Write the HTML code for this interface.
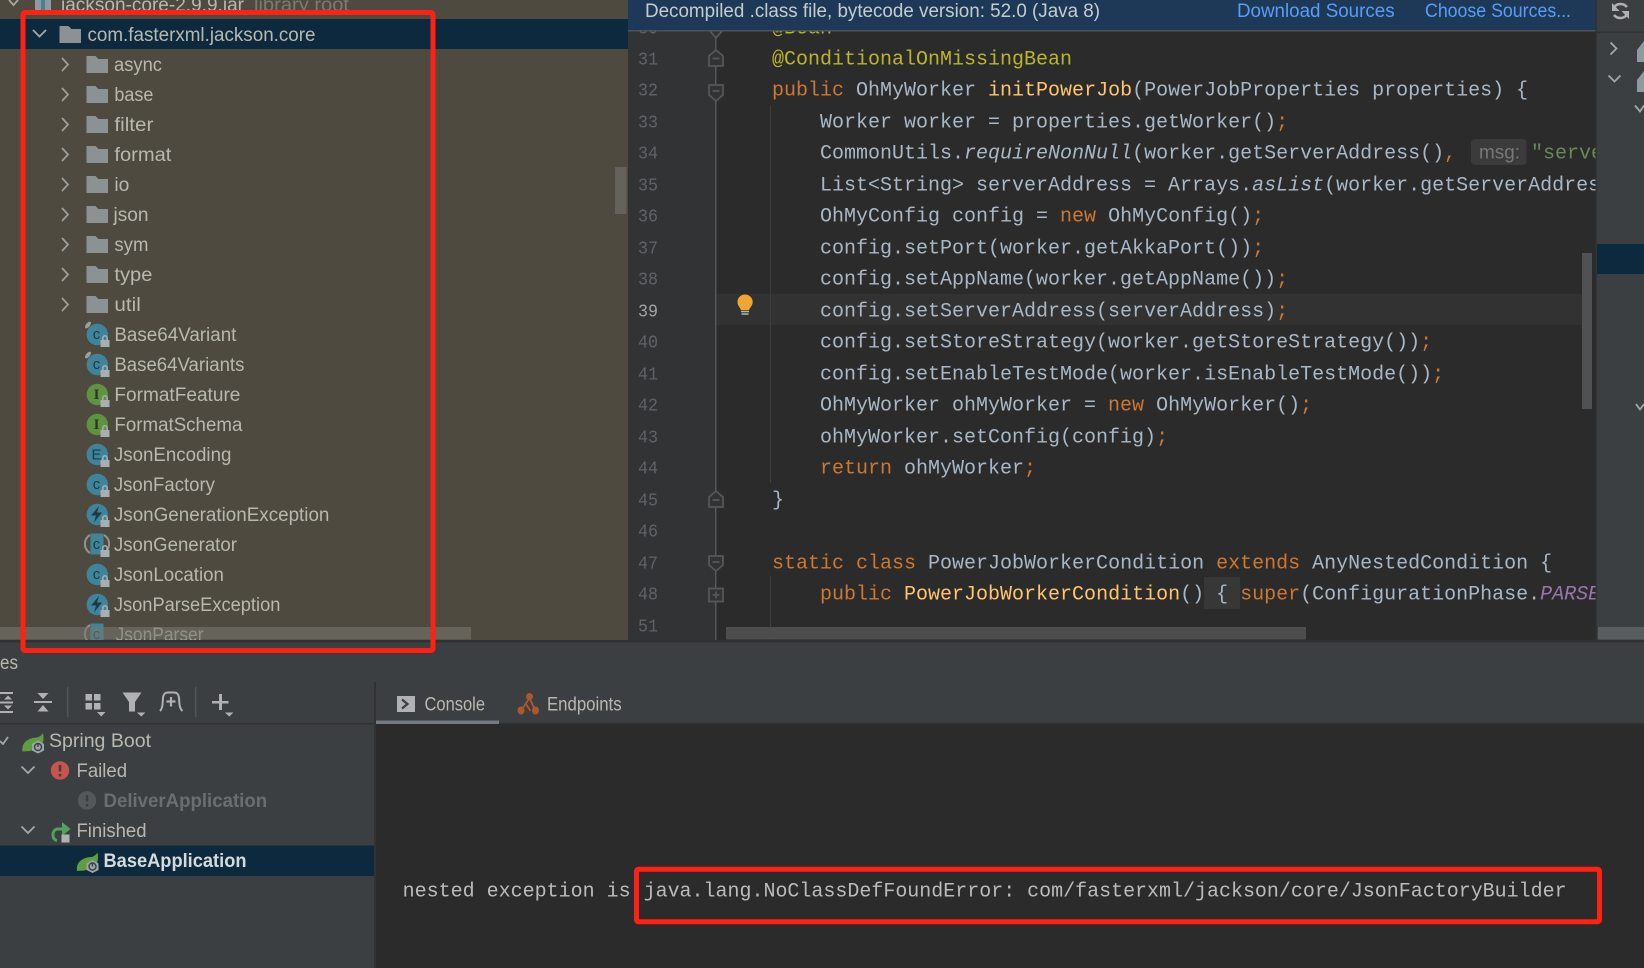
<!DOCTYPE html>
<html><head><meta charset="utf-8"><style>
html,body{margin:0;padding:0;background:#3c3f41;overflow:hidden}
svg{display:block}
text{white-space:pre}
.s{font-family:"Liberation Sans",sans-serif;font-size:19px;fill:#b8b8b0}
.m{font-family:"Liberation Mono",monospace;font-size:20px;fill:#a9b7c6}
.n{font-family:"Liberation Mono",monospace;font-size:18px;fill:#606366}
.k{fill:#cc7832}.a{fill:#bbb529}.f{fill:#ffc66d}.i{font-style:italic}.p{fill:#9876aa;font-style:italic}.g{fill:#6a8759}
.c{font-family:"Liberation Sans",sans-serif;font-size:15px;fill:#1d3a47;text-anchor:middle}
</style></head><body>
<svg width="1644" height="968" viewBox="0 0 1644 968" xmlns="http://www.w3.org/2000/svg">
<defs>
<clipPath id="tree"><rect x="0" y="0" width="628" height="640"/></clipPath>
<clipPath id="code"><rect x="716" y="0" width="880" height="640"/></clipPath>
<g id="lk"><path d="M6 5.500V3.500a2.200 2.200 0 0 1 4.400 0V5.500" fill="none" stroke="#a9aeb1" stroke-width="1.500"/><rect x="3.700" y="5.500" width="9" height="7" fill="#a9aeb1"/></g>
<path id="fd" d="M0 0H9L12 3H21.500V17H0Z" fill="#8c9293"/>
<path id="ch" d="M0 0L6 6.500L0 13" fill="none" stroke="#9c9e9c" stroke-width="1.800"/>
<path id="cd" d="M0 0L6.500 6.500L13 0" fill="none" stroke="#a5a8a8" stroke-width="1.800"/>
<g id="sp"><path d="M0.500 19C-1 9 8 5 15.500 5C17.500 4 19.500 3 21 0.500C22.500 8 20.500 13 17.500 15L8 18.500Z" fill="#5f9e3f"/><path d="M16 8L22 11.500V18L16 21L10 18V11.500Z" fill="#9aa7b0"/><circle cx="16" cy="14.500" r="3.500" fill="none" stroke="#3c3f41" stroke-width="1.400"/><path d="M16 11.500V14.500" stroke="#3c3f41" stroke-width="1.400"/></g>
</defs>

<!-- base -->
<rect width="1644" height="968" fill="#3c3f41"/>

<!-- tree panel -->
<rect x="0" y="0" width="628" height="640" fill="#4e4a3f"/>
<g clip-path="url(#tree)">
<rect x="0" y="19" width="628" height="30" fill="#0d293e"/>
<path d="M9 0L13.500 5L18 0" fill="none" stroke="#a5a8a0" stroke-width="1.800"/>
<rect x="35" y="-8" width="16" height="20" fill="#8f9aa0"/><rect x="41" y="0" width="4" height="10" fill="#4e7f90"/>
<text class="s" x="61" y="11" textLength="183" lengthAdjust="spacingAndGlyphs">jackson-core-2.9.9.jar</text>
<text class="s" x="254" y="11" textLength="95" lengthAdjust="spacingAndGlyphs" style="fill:#7d7a6e">library root</text>

<use href="#cd" x="33" y="30"/>
<use href="#fd" x="59.500" y="26"/>
<text class="s" x="87.500" y="41" textLength="228" lengthAdjust="spacingAndGlyphs">com.fasterxml.jackson.core</text>

<use href="#ch" x="62" y="58"/><use href="#fd" x="86.500" y="56"/><text class="s" x="114" y="71" textLength="48" lengthAdjust="spacingAndGlyphs">async</text>
<use href="#ch" x="62" y="88"/><use href="#fd" x="86.500" y="86"/><text class="s" x="114.400" y="101" textLength="39" lengthAdjust="spacingAndGlyphs">base</text>
<use href="#ch" x="62" y="118"/><use href="#fd" x="86.500" y="116"/><text class="s" x="114.400" y="131" textLength="39" lengthAdjust="spacingAndGlyphs">filter</text>
<use href="#ch" x="62" y="148"/><use href="#fd" x="86.500" y="146"/><text class="s" x="114.400" y="161" textLength="57" lengthAdjust="spacingAndGlyphs">format</text>
<use href="#ch" x="62" y="178"/><use href="#fd" x="86.500" y="176"/><text class="s" x="114.400" y="191" textLength="15" lengthAdjust="spacingAndGlyphs">io</text>
<use href="#ch" x="62" y="208"/><use href="#fd" x="86.500" y="206"/><text class="s" x="113.500" y="221" textLength="35" lengthAdjust="spacingAndGlyphs">json</text>
<use href="#ch" x="62" y="238"/><use href="#fd" x="86.500" y="236"/><text class="s" x="114.400" y="251" textLength="34" lengthAdjust="spacingAndGlyphs">sym</text>
<use href="#ch" x="62" y="268"/><use href="#fd" x="86.500" y="266"/><text class="s" x="114.400" y="281" textLength="38" lengthAdjust="spacingAndGlyphs">type</text>
<use href="#ch" x="62" y="298"/><use href="#fd" x="86.500" y="296"/><text class="s" x="114.400" y="311" textLength="26.500" lengthAdjust="spacingAndGlyphs">util</text>

<!-- class rows -->
<circle cx="97.300" cy="334.500" r="10.700" fill="#40849c"/><ellipse cx="88" cy="325" rx="2" ry="4" transform="rotate(40 88 325)" fill="#9d9f9c"/><text class="c" x="96.500" y="339">c</text><use href="#lk" x="96.800" y="334.500"/>
<text class="s" x="114.400" y="341" textLength="122" lengthAdjust="spacingAndGlyphs">Base64Variant</text>
<circle cx="97.300" cy="364.500" r="10.700" fill="#40849c"/><ellipse cx="88" cy="355" rx="2" ry="4" transform="rotate(40 88 355)" fill="#9d9f9c"/><text class="c" x="96.500" y="369">c</text><use href="#lk" x="96.800" y="364.500"/>
<text class="s" x="114.400" y="371" textLength="130" lengthAdjust="spacingAndGlyphs">Base64Variants</text>
<circle cx="97.300" cy="394.500" r="10.700" fill="#5f9340"/><text class="c" x="96.500" y="399" style="fill:#27381c;font-family:'Liberation Serif',serif;font-weight:bold">I</text><use href="#lk" x="96.800" y="394.500"/>
<text class="s" x="114.400" y="401" textLength="126" lengthAdjust="spacingAndGlyphs">FormatFeature</text>
<circle cx="97.300" cy="424.500" r="10.700" fill="#5f9340"/><text class="c" x="96.500" y="429" style="fill:#27381c;font-family:'Liberation Serif',serif;font-weight:bold">I</text><use href="#lk" x="96.800" y="424.500"/>
<text class="s" x="114.400" y="431" textLength="128" lengthAdjust="spacingAndGlyphs">FormatSchema</text>
<circle cx="97.300" cy="454.500" r="10.700" fill="#40849c"/><text class="c" x="96.500" y="459.500">E</text><use href="#lk" x="96.800" y="454.500"/>
<text class="s" x="113.900" y="461" textLength="117.500" lengthAdjust="spacingAndGlyphs">JsonEncoding</text>
<circle cx="97.300" cy="484.500" r="10.700" fill="#40849c"/><text class="c" x="96.500" y="489">c</text><use href="#lk" x="96.800" y="484.500"/>
<text class="s" x="113.900" y="491" textLength="101" lengthAdjust="spacingAndGlyphs">JsonFactory</text>
<circle cx="97.300" cy="514.500" r="10.700" fill="#40849c"/><path d="M99 506L91 515.500H96L94 522.500L102 512.500H97Z" fill="#1d3a47"/><use href="#lk" x="96.800" y="514.500"/>
<text class="s" x="113.900" y="521" textLength="215.500" lengthAdjust="spacingAndGlyphs">JsonGenerationException</text>
<path d="M90 535A10.500 10.500 0 0 0 90 553" fill="none" stroke="#8f9597" stroke-width="2"/><path d="M104 535A10.500 10.500 0 0 1 104 553" fill="none" stroke="#8f9597" stroke-width="2"/><rect x="90.500" y="533.500" width="13" height="21" fill="#40849c"/><text class="c" x="96.500" y="549">c</text><use href="#lk" x="96.800" y="544.500"/>
<text class="s" x="113.900" y="551" textLength="123" lengthAdjust="spacingAndGlyphs">JsonGenerator</text>
<circle cx="97.300" cy="574.500" r="10.700" fill="#40849c"/><text class="c" x="96.500" y="579">c</text><use href="#lk" x="96.800" y="574.500"/>
<text class="s" x="113.900" y="581" textLength="110" lengthAdjust="spacingAndGlyphs">JsonLocation</text>
<circle cx="97.300" cy="604.500" r="10.700" fill="#40849c"/><path d="M99 596L91 605.500H96L94 612.500L102 602.500H97Z" fill="#1d3a47"/><use href="#lk" x="96.800" y="604.500"/>
<text class="s" x="113.900" y="611" textLength="166.500" lengthAdjust="spacingAndGlyphs">JsonParseException</text>
<path d="M90 625A10.500 10.500 0 0 0 90 643" fill="none" stroke="#8f9597" stroke-width="2"/><rect x="90.500" y="623.500" width="13" height="21" fill="#40849c"/><text class="c" x="96.500" y="639">c</text>
<text class="s" x="115.500" y="641" textLength="88" lengthAdjust="spacingAndGlyphs">JsonParser</text>
</g>
<rect x="0" y="627" width="471" height="12.500" fill="#77766c" fill-opacity=".6"/>
<rect x="615" y="167" width="11.500" height="47" fill="#64625a"/>

<!-- gutter and editor -->
<rect x="628" y="0" width="88" height="640" fill="#313335"/>
<rect x="716" y="0" width="880" height="640" fill="#2b2b2b"/>
<rect x="716" y="294" width="868" height="31" fill="#323232"/>
<rect x="715" y="30" width="1.500" height="610" fill="#555759"/>
<path d="M770.500 105V483M770.500 576V640" stroke="#3e3e3e" stroke-width="1"/>

<!-- fold marks -->
<g fill="#313335" stroke="#555759" stroke-width="1.800">
<path d="M709 30L716 38L723 30"/>
<path d="M709 66V56L716 50L723 56V66Z"/><path d="M712.500 58.500H719.500"/>
<path d="M709 85H723V95L716 101L709 95Z"/><path d="M712.500 91H719.500"/>
<path d="M709 507V497L716 491L723 497V507Z"/><path d="M712.500 500H719.500"/>
<path d="M709 556H723V565L716 571L709 565Z"/><path d="M712.500 562H719.500"/>
<rect x="709" y="588.500" width="14" height="13"/><path d="M712.500 595H719.500M716 591.500V598.500"/>
</g>

<!-- bulb -->
<path d="M745 294.500C749.500 294.500 752.700 298 752.700 302C752.700 305.500 750.200 307 749 310H741C739.800 307 737.500 305.500 737.500 302C737.500 298 740.500 294.500 745 294.500Z" fill="#f0a732"/>
<path d="M741 311.500H749M741.500 314H748.500" stroke="#b7b7b0" stroke-width="1.500"/>

<!-- line numbers -->
<g transform="translate(0,-0.600)">
<text class="n" x="638" y="34" textLength="20" lengthAdjust="spacingAndGlyphs">30</text>
<text class="n" x="638" y="65" textLength="20" lengthAdjust="spacingAndGlyphs">31</text>
<text class="n" x="638" y="96" textLength="20" lengthAdjust="spacingAndGlyphs">32</text>
<text class="n" x="638" y="128" textLength="20" lengthAdjust="spacingAndGlyphs">33</text>
<text class="n" x="638" y="159" textLength="20" lengthAdjust="spacingAndGlyphs">34</text>
<text class="n" x="638" y="191" textLength="20" lengthAdjust="spacingAndGlyphs">35</text>
<text class="n" x="638" y="222" textLength="20" lengthAdjust="spacingAndGlyphs">36</text>
<text class="n" x="638" y="254" textLength="20" lengthAdjust="spacingAndGlyphs">37</text>
<text class="n" x="638" y="285" textLength="20" lengthAdjust="spacingAndGlyphs">38</text>
<text class="n" x="638" y="317" textLength="20" lengthAdjust="spacingAndGlyphs" style="fill:#a4a3a3">39</text>
<text class="n" x="638" y="348" textLength="20" lengthAdjust="spacingAndGlyphs">40</text>
<text class="n" x="638" y="380" textLength="20" lengthAdjust="spacingAndGlyphs">41</text>
<text class="n" x="638" y="411" textLength="20" lengthAdjust="spacingAndGlyphs">42</text>
<text class="n" x="638" y="443" textLength="20" lengthAdjust="spacingAndGlyphs">43</text>
<text class="n" x="638" y="474" textLength="20" lengthAdjust="spacingAndGlyphs">44</text>
<text class="n" x="638" y="506" textLength="20" lengthAdjust="spacingAndGlyphs">45</text>
<text class="n" x="638" y="537" textLength="20" lengthAdjust="spacingAndGlyphs">46</text>
<text class="n" x="638" y="569" textLength="20" lengthAdjust="spacingAndGlyphs">47</text>
<text class="n" x="638" y="600" textLength="20" lengthAdjust="spacingAndGlyphs">48</text>
<text class="n" x="638" y="632" textLength="20" lengthAdjust="spacingAndGlyphs">51</text>
</g>

<!-- code -->
<rect x="1471" y="139" width="55.500" height="26" rx="4" fill="#3b3b3b"/>
<rect x="1204" y="577" width="36" height="32" fill="#373737"/>
<g clip-path="url(#code)"><g transform="translate(0,-0.700)">
<text class="m" x="772" y="34"><tspan class="a">@Bean</tspan></text>
<text class="m" x="772" y="65"><tspan class="a">@ConditionalOnMissingBean</tspan></text>
<text class="m" x="772" y="96"><tspan class="k">public</tspan> OhMyWorker <tspan class="f">initPowerJob</tspan>(PowerJobProperties properties) {</text>
<text class="m" x="820" y="128">Worker worker = properties.getWorker()<tspan class="k">;</tspan></text>
<text class="m" x="820" y="159">CommonUtils.<tspan class="i">requireNonNull</tspan>(worker.getServerAddress()<tspan class="k">,</tspan></text>
<text class="s" x="1479" y="159" textLength="41" lengthAdjust="spacingAndGlyphs" style="fill:#787878">msg:</text>
<text class="m" x="1531" y="159"><tspan class="g">"serverAddress</tspan></text>
<text class="m" x="820" y="191">List&lt;String&gt; serverAddress = Arrays.<tspan class="i">asList</tspan>(worker.getServerAddress());</text>
<text class="m" x="820" y="222">OhMyConfig config = <tspan class="k">new</tspan> OhMyConfig()<tspan class="k">;</tspan></text>
<text class="m" x="820" y="254">config.setPort(worker.getAkkaPort())<tspan class="k">;</tspan></text>
<text class="m" x="820" y="285">config.setAppName(worker.getAppName())<tspan class="k">;</tspan></text>
<text class="m" x="820" y="317">config.setServerAddress(serverAddress)<tspan class="k">;</tspan></text>
<text class="m" x="820" y="348">config.setStoreStrategy(worker.getStoreStrategy())<tspan class="k">;</tspan></text>
<text class="m" x="820" y="380">config.setEnableTestMode(worker.isEnableTestMode())<tspan class="k">;</tspan></text>
<text class="m" x="820" y="411">OhMyWorker ohMyWorker = <tspan class="k">new</tspan> OhMyWorker()<tspan class="k">;</tspan></text>
<text class="m" x="820" y="443">ohMyWorker.setConfig(config)<tspan class="k">;</tspan></text>
<text class="m" x="820" y="474"><tspan class="k">return</tspan> ohMyWorker<tspan class="k">;</tspan></text>
<text class="m" x="772" y="506">}</text>
<text class="m" x="772" y="569"><tspan class="k">static class</tspan> PowerJobWorkerCondition <tspan class="k">extends</tspan> AnyNestedCondition {</text>
<text class="m" x="820" y="600"><tspan class="k">public</tspan> <tspan class="f">PowerJobWorkerCondition</tspan>() { <tspan class="k">super</tspan>(ConfigurationPhase.<tspan class="p">PARSE_CONFIGURATION</tspan>);</text>
</g></g>

<!-- editor scrollbars -->
<rect x="1582" y="253" width="10" height="156" fill="#4f5152"/>
<rect x="726" y="627" width="580" height="12.500" fill="#4d4d4d"/>

<!-- decompiled banner -->
<rect x="628" y="0" width="968" height="30" fill="#1d3957"/>
<rect x="628" y="30" width="968" height="1.500" fill="#4c5358"/>
<text class="s" x="645" y="17" textLength="455" lengthAdjust="spacingAndGlyphs" style="fill:#c4ccd2">Decompiled .class file, bytecode version: 52.0 (Java 8)</text>
<text class="s" x="1237" y="17" textLength="157.600" lengthAdjust="spacingAndGlyphs" style="fill:#589df6">Download Sources</text>
<text class="s" x="1425" y="17" textLength="146" lengthAdjust="spacingAndGlyphs" style="fill:#589df6">Choose Sources...</text>

<!-- right panel -->
<rect x="1596" y="0" width="48" height="640" fill="#3c3f41"/>
<rect x="1595.500" y="0" width="1.500" height="640" fill="#323232"/>
<rect x="1597" y="31.500" width="47" height="1.500" fill="#323232"/>
<rect x="1597" y="244" width="47" height="30" fill="#0d293e"/>
<rect x="1598" y="627" width="46" height="12.500" fill="#5a5d5e"/>
<path d="M1627 7C1623 2.500 1616 3 1613.500 8.500M1614 15C1618 19.500 1625 19 1627.500 13.500" fill="none" stroke="#afb1b3" stroke-width="2.500"/>
<path d="M1612 3V11H1619.500ZM1629 19V11H1621.500Z" fill="#afb1b3"/>
<path d="M1610.500 42.500L1616.500 48.500L1610.500 54.500M1608.500 75.500L1614.500 81.500L1620.500 75.500M1635 105.500L1640 111.500L1644 105.500M1636 404L1640 409.500L1644 404" fill="none" stroke="#a5a8a8" stroke-width="1.800"/>
<path d="M1637 50L1644 41V62H1637ZM1637 80L1644 71V92H1637Z" fill="#8f9aa0"/>

<!-- divider under top panes -->
<rect x="0" y="640" width="1644" height="2.500" fill="#2f3132"/>

<!-- bottom pane -->
<text class="s" x="0" y="669" textLength="18" lengthAdjust="spacingAndGlyphs">es</text>
<rect x="0" y="723" width="374" height="1.500" fill="#323232"/>
<rect x="374" y="682" width="2" height="286" fill="#323232"/>
<rect x="376" y="723.500" width="1268" height="244.500" fill="#2b2b2b"/>
<rect x="376" y="722.500" width="1268" height="1.500" fill="#323232"/>
<rect x="376" y="720.500" width="123" height="3.500" fill="#747a80"/>

<!-- toolbar icons -->
<g fill="#afb1b3">
<path d="M0 692H13V694H0ZM0 711H13V713H0ZM0 701.500H13V703.500H0ZM4 699.500L8 695.500L12 699.500ZM4 705.500H12L8 709.500Z"/>
<path d="M34 701H52V703H34ZM37.500 693H48.500L43 699ZM43 705L48.500 711.500H37.500Z"/>
<path d="M85.500 694H92V700.500H85.500ZM94 694H100.500V700.500H94ZM85.500 703H92V709.500H85.500ZM94 703H100.500V709.500H94ZM97 712H105.500L101.250 716.500Z"/>
<path d="M122.500 692.500H141.500L135 702V711.500H129V702ZM137 712.500H145.500L141.250 716.500Z"/>
<path d="M219 694H222V701H228.500V703.500H222V710H219V703.500H212V701H219ZM225 712.500H233.500L229.250 716.500Z"/>
</g>
<path d="M160 711C163 708 162.500 703 163 698C163.500 694 165 692.500 168 692.500H174C177 692.500 178.500 694 179 698C179.500 703 179 708 182.500 711" fill="none" stroke="#afb1b3" stroke-width="2"/>
<path d="M171 697V706.500M166.500 701.500H175.500" stroke="#afb1b3" stroke-width="2.200"/>
<rect x="67" y="687" width="1.500" height="30" fill="#515455"/>
<rect x="195" y="687" width="1.500" height="30" fill="#515455"/>

<!-- tool tree -->
<rect x="0" y="845.500" width="374" height="30.500" fill="#0d293e"/>
<path d="M0 741L3 744L8 737" fill="none" stroke="#a5a8a8" stroke-width="1.800"/>
<use href="#sp" x="22" y="732.500"/>
<text class="s" x="49" y="747" textLength="102" lengthAdjust="spacingAndGlyphs">Spring Boot</text>

<use href="#cd" x="21.500" y="766.500"/>
<circle cx="60" cy="770.500" r="9.200" fill="#c75450"/>
<path d="M60 765V771.500M60 774V776.500" stroke="#3c3f41" stroke-width="2.500"/>
<text class="s" x="76.500" y="777" textLength="50.600" lengthAdjust="spacingAndGlyphs">Failed</text>

<circle cx="87" cy="800.500" r="9.200" fill="#55585a"/>
<path d="M87 795V801.500M87 804V806.500" stroke="#3c3f41" stroke-width="2.500"/>
<text class="s" x="103.500" y="807" textLength="163.600" lengthAdjust="spacingAndGlyphs" style="font-weight:bold;fill:#6b6e70">DeliverApplication</text>

<use href="#cd" x="21.500" y="826.500"/>
<path d="M62 829H58C54.500 829 53 832 53 835C53 838 54.500 840 57 840.500" fill="none" stroke="#4fa35a" stroke-width="3"/>
<path d="M62 822L70.500 829L62 836Z" fill="#4fa35a"/>
<rect x="61.500" y="834.500" width="8" height="8" fill="#afb1b3"/>
<text class="s" x="76.500" y="837" textLength="70" lengthAdjust="spacingAndGlyphs">Finished</text>

<use href="#sp" x="76.500" y="852"/>
<text class="s" x="103.500" y="867" textLength="143" lengthAdjust="spacingAndGlyphs" style="font-weight:bold;fill:#d6dadd">BaseApplication</text>

<!-- tabs -->
<rect x="397" y="696" width="18" height="16" fill="#afb1b3"/>
<path d="M402 699.500L407.500 704L402 708.500" fill="none" stroke="#3c3f41" stroke-width="2.200"/>
<text class="s" x="424.500" y="710.500" textLength="60.500" lengthAdjust="spacingAndGlyphs">Console</text>
<path d="M529.500 698L521 711M529.500 698L535.500 711M526 704L530.500 711" fill="none" stroke="#b0562b" stroke-width="1.800"/>
<circle cx="529.500" cy="696.500" r="3.500" fill="#b0562b"/>
<ellipse cx="521" cy="710.500" rx="3.500" ry="4" fill="#b0562b"/>
<ellipse cx="535.500" cy="710.500" rx="3.500" ry="4" fill="#b0562b"/>
<text class="s" x="547" y="710.500" textLength="74.600" lengthAdjust="spacingAndGlyphs">Endpoints</text>

<!-- console -->
<text class="m" x="402.600" y="896.500" textLength="228" lengthAdjust="spacingAndGlyphs" style="fill:#bbbbbb">nested exception is</text>
<text class="m" x="643.600" y="896.500" textLength="923" lengthAdjust="spacingAndGlyphs" style="fill:#bbbbbb">java.lang.NoClassDefFoundError: com/fasterxml/jackson/core/JsonFactoryBuilder</text>

<!-- red annotation boxes -->
<rect x="23" y="12.500" width="410" height="638" rx="2" fill="none" stroke="#ff2114" stroke-width="5"/>
<rect x="636.500" y="869.200" width="963" height="52.500" rx="2" fill="none" stroke="#ff2114" stroke-width="5"/>
</svg>
</body></html>
